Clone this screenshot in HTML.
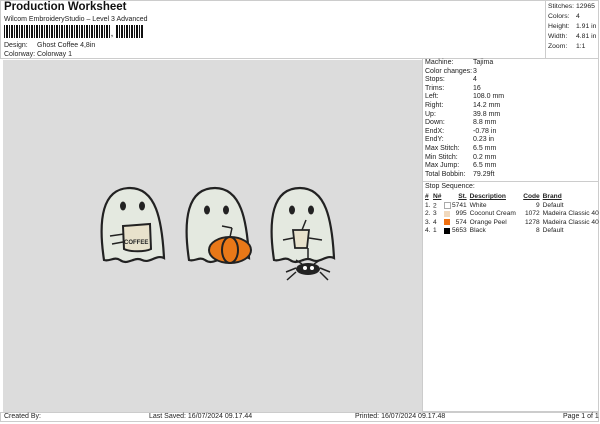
<!DOCTYPE html><html><head><style>
body{margin:0;width:600px;height:424px;background:#fff;font-family:"Liberation Sans",sans-serif;color:#222;position:relative;overflow:hidden}
.a{position:absolute;font-size:7px;white-space:nowrap}
.t td{font-size:6.6px;padding:0;height:8.5px;line-height:8px;white-space:nowrap}
.t span{vertical-align:middle}
</style></head><body>
<div class="a" style="left:4px;top:1px;font-size:11.5px;font-weight:bold;color:#111">Production Worksheet</div>
<div class="a" style="left:4px;top:16px">Wilcom EmbroideryStudio – Level 3 Advanced</div>
<div class="a" style="left:4px;top:25px;width:140px;height:13px;background:repeating-linear-gradient(90deg,#111 0 1px,#fff 1px 2px,#111 2px 3px,#111 3px 4px,#fff 4px 5px)"></div>
<div class="a" style="left:110px;top:25px;width:6px;height:14px;background:#fff"></div><div class="a" style="left:111px;top:31px;font-weight:bold">,</div>
<div class="a" style="left:4px;top:42px">Design:</div><div class="a" style="left:37px;top:42px">Ghost Coffee 4,8in</div>
<div class="a" style="left:4px;top:51px">Colorway:</div><div class="a" style="left:37px;top:51px">Colorway 1</div>
<div class="a" style="left:0;top:0;width:599px;height:59px;border:1px solid #ccc;box-sizing:border-box"></div>
<div class="a" style="left:545px;top:0;width:55px;height:59px;border-left:1px solid #ccc"></div>
<div class="a" style="left:548px;top:2px;line-height:10px;font-size:6.8px">Stitches:<br>Colors:<br>Height:<br>Width:<br>Zoom:</div>
<div class="a" style="left:576px;top:2px;line-height:10px;font-size:6.8px">12965<br>4<br>1.91 in<br>4.81 in<br>1:1</div>
<div class="a" style="left:3px;top:60px;width:419px;height:352px;background:#dcdcdc"></div>
<div class="a" style="left:422px;top:59px;width:177px;height:353px;border:1px solid #ccc;border-top:0;box-sizing:border-box"></div>
<div class="a" style="left:425px;top:59px;line-height:8.6px">Machine:<br>Color changes:<br>Stops:<br>Trims:<br>Left:<br>Right:<br>Up:<br>Down:<br>EndX:<br>EndY:<br>Max Stitch:<br>Min Stitch:<br>Max Jump:<br>Total Bobbin:</div>
<div class="a" style="left:473px;top:59px;line-height:8.6px">Tajima<br>3<br>4<br>16<br>108.0 mm<br>14.2 mm<br>39.8 mm<br>8.8 mm<br>-0.78 in<br>0.23 in<br>6.5 mm<br>0.2 mm<br>6.5 mm<br>79.29ft</div>
<div class="a" style="left:422px;top:181px;width:177px;border-top:1px solid #ccc"></div>
<div class="a" style="left:425px;top:183px">Stop Sequence:</div>
<table class="t a" style="left:425px;top:193px;border-collapse:collapse">
<tr style="font-weight:bold;text-decoration:underline"><td style="width:8px">#</td><td style="width:19px">N#</td><td style="width:14px;text-align:right">St.</td><td style="width:49px;padding-left:3px">Description</td><td style="width:21px;text-align:right">Code</td><td style="padding-left:3px">Brand</td></tr>
<tr><td>1.</td><td>2 <span style="display:inline-block;width:5px;height:5px;border:1px solid #aaa;background:#fff;margin-left:5px"></span></td><td style="text-align:right">5741</td><td style="padding-left:3px">White</td><td style="text-align:right">9</td><td style="padding-left:3px">Default</td></tr>
<tr><td>2.</td><td>3 <span style="display:inline-block;width:6px;height:6px;background:#f1d9bd;margin-left:5px"></span></td><td style="text-align:right">995</td><td style="padding-left:3px">Coconut Cream</td><td style="text-align:right">1072</td><td style="padding-left:3px">Madeira Classic 40</td></tr>
<tr><td>3.</td><td>4 <span style="display:inline-block;width:6px;height:6px;background:#f07010;margin-left:5px"></span></td><td style="text-align:right">574</td><td style="padding-left:3px">Orange Peel</td><td style="text-align:right">1278</td><td style="padding-left:3px">Madeira Classic 40</td></tr>
<tr><td>4.</td><td>1 <span style="display:inline-block;width:6px;height:6px;background:#000;margin-left:5px"></span></td><td style="text-align:right">5653</td><td style="padding-left:3px">Black</td><td style="text-align:right">8</td><td style="padding-left:3px">Default</td></tr>
</table>
<svg class="a" style="left:90px;top:180px" width="250" height="110" viewBox="0 0 250 110">
<g stroke="#222" stroke-width="2.2" fill="#e4e9e0">
<path d="M14,80 C8,40 12,8 40,8 C66,8 72,40 74,78 C66,74 60,84 52,80 C44,76 38,86 30,80 C24,76 20,82 14,80Z"/>
<path d="M99,80 C93,40 97,8 125,8 C151,8 157,40 159,78 C151,74 145,84 137,80 C129,76 123,86 115,80 C109,76 105,82 99,80Z"/>
<path d="M184,80 C178,40 182,8 210,8 C236,8 242,40 244,78 C236,74 230,84 222,80 C214,76 208,86 200,80 C194,76 190,82 184,80Z"/>
</g>
<g fill="#222"><ellipse cx="33" cy="26" rx="3" ry="4.5"/><ellipse cx="52" cy="26" rx="3" ry="4.5"/><ellipse cx="117" cy="30" rx="3" ry="4.5"/><ellipse cx="136" cy="30" rx="3" ry="4.5"/><ellipse cx="202" cy="30" rx="3" ry="4.5"/><ellipse cx="221" cy="30" rx="3" ry="4.5"/></g>
<path d="M33,46 L60,44 L61,69 C55,72 40,72 34,69Z" fill="#e8e2cc" stroke="#222" stroke-width="2"/>
<text x="34" y="64" font-size="6" font-weight="bold" fill="#222" font-family="Liberation Sans">COFFEE</text>
<path d="M20,56 L34,54 M22,64 L33,62" stroke="#222" stroke-width="1.5"/>
<g stroke="#222" stroke-width="2" fill="#e87818"><ellipse cx="140" cy="70" rx="21" ry="13"/><ellipse cx="140" cy="70" rx="8" ry="13"/></g>
<path d="M140,57 L142,48 M132,46 L142,48" stroke="#222" stroke-width="1.5" fill="none"/>
<path d="M203,50 L219,50 L217,68 L205,68Z" fill="#e8e2cc" stroke="#222" stroke-width="1.8"/>
<path d="M212,50 L216,40 M193,60 L203,58 M219,58 L232,60" stroke="#222" stroke-width="1.5"/>
<g stroke="#222" stroke-width="1.5" fill="none"><path d="M206,88 L196,92 M206,92 L197,100 M230,88 L240,92 M230,92 L238,100 M212,84 L206,80 M224,84 L230,80 M218,80 L218,68"/></g>
<ellipse cx="218" cy="89" rx="12" ry="6" fill="#222"/><circle cx="215" cy="88" r="2" fill="#fff"/><circle cx="222" cy="88" r="2" fill="#fff"/>
</svg>
<div class="a" style="left:0;top:412px;width:599px;height:10px;border:1px solid #ccc;box-sizing:border-box"></div>
<div class="a" style="left:4px;top:413px">Created By:</div>
<div class="a" style="left:149px;top:413px">Last Saved: 16/07/2024 09.17.44</div>
<div class="a" style="left:355px;top:413px">Printed: 16/07/2024 09.17.48</div>
<div class="a" style="left:563px;top:413px">Page 1 of 1</div>
</body></html>
